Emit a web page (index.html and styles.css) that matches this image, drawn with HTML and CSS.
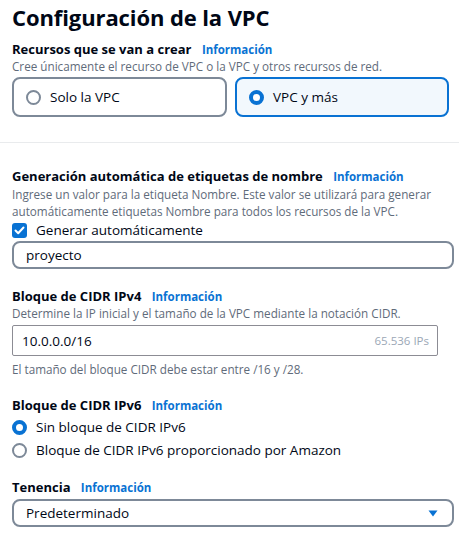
FILE: index.html
```html
<!DOCTYPE html>
<html lang="es">
<head>
<meta charset="utf-8">
<link rel="stylesheet" href="styles.css">
</head>
<body>
<div class="page">
  <h1 class="title">Configuración de la VPC</h1>

  <section class="field top">
    <div class="label">Recursos que se van a crear <a class="info">Información</a></div>
    <div class="desc">Cree únicamente el recurso de VPC o la VPC y otros recursos de red.</div>
    <div class="tiles">
      <div class="tile">
        <span class="radio"></span><span>Solo la VPC</span>
      </div>
      <div class="tile selected">
        <span class="radio on"></span><span>VPC y más</span>
      </div>
    </div>
  </section>
</div>

<hr class="sep">

<div class="page">
  <section class="field gen">
    <div class="label">Generación automática de etiquetas de nombre <a class="info">Información</a></div>
    <div class="desc">Ingrese un valor para la etiqueta Nombre. Este valor se utilizará para generar automáticamente etiquetas Nombre para todos los recursos de la VPC.</div>
    <label class="check-row">
      <span class="checkbox"><svg width="11" height="9" viewBox="0 0 11 9"><path d="M1.5 4.5 L4.2 7.2 L9.5 1.5" fill="none" stroke="#fff" stroke-width="2" stroke-linecap="round" stroke-linejoin="round"/></svg></span>
      <span>Generar automáticamente</span>
    </label>
    <div class="input round name">proyecto</div>
  </section>

  <section class="field ipv4">
    <div class="label">Bloque de CIDR IPv4 <a class="info">Información</a></div>
    <div class="desc">Determine la IP inicial y el tamaño de la VPC mediante la notación CIDR.</div>
    <div class="input square"><span>10.0.0.0/16</span><span class="count">65.536 IPs</span></div>
    <div class="desc help">El tamaño del bloque CIDR debe estar entre /16 y /28.</div>
  </section>

  <section class="field ipv6">
    <div class="label">Bloque de CIDR IPv6 <a class="info">Información</a></div>
    <div class="radio-list">
      <div class="radio-row"><span class="radio on"></span><span>Sin bloque de CIDR IPv6</span></div>
      <div class="radio-row"><span class="radio"></span><span>Bloque de CIDR IPv6 proporcionado por Amazon</span></div>
    </div>
  </section>

  <section class="field tenancy">
    <div class="label">Tenencia <a class="info">Información</a></div>
    <div class="input round select"><span>Predeterminado</span><svg class="caret" width="10" height="7" viewBox="0 0 10 7"><path d="M0.5 0.5 H9.5 L5 6.5 Z" fill="#0972d3"/></svg></div>
  </section>
</div>
</body>
</html>
```

FILE: styles.css
```css
* { box-sizing: border-box; }
html, body { margin: 0; padding: 0; background: #fff; }
body {
  font-family: "Open Sans", "Noto Sans", sans-serif;
  color: #000716;
  font-size: 14px;
  width: 459px;
  overflow: hidden;
}
.page { padding: 0 5px 0 12px; }
.title {
  margin: 0;
  padding-top: 3px;
  font-size: 22px;
  font-weight: 700;
  line-height: 28px;
  letter-spacing: -0.1px;
}
.field { display: flex; flex-direction: column; }
.top { margin-top: 10px; }
.label {
  font-size: 13px;
  font-weight: 700;
  line-height: 17px;
}
.info {
  color: #0972d3;
  font-size: 11.5px;
  font-weight: 700;
  margin-left: 7px;
}
.desc {
  font-size: 11.7px;
  color: #5f6b7a;
  line-height: 17px;
}
.tiles {
  display: grid;
  grid-template-columns: 215px 214px;
  gap: 8px;
  margin-top: 2px;
}
.tile {
  height: 40px;
  border: 2px solid #7d8998;
  border-radius: 8px;
  display: flex;
  align-items: center;
  gap: 9px;
  padding-left: 12px;
  font-size: 13.5px;
}
.tile.selected {
  border-color: #0972d3;
  background: #f2f8fd;
}
.radio {
  width: 15px;
  height: 15px;
  border-radius: 50%;
  border: 2px solid #7d8998;
  flex: none;
  background: #fff;
}
.radio.on {
  border: 4.5px solid #0972d3;
}
.sep {
  border: 0;
  border-top: 1px solid #e9ebed;
  margin: 25px 0 0 0;
}
.gen { margin-top: 25px; }
.gen .desc { margin-top: 1px; }
.check-row {
  display: flex;
  align-items: center;
  gap: 9px;
  font-size: 13.5px;
  margin-top: 1px;
  line-height: 18px;
}
.checkbox {
  width: 15px;
  height: 15px;
  border-radius: 3px;
  background: #0972d3;
  display: flex;
  align-items: center;
  justify-content: center;
}
.input {
  display: flex;
  align-items: center;
  font-size: 13.5px;
  color: #000716;
}
.input.round {
  height: 28px;
  border: 2px solid #7d8998;
  border-radius: 8px;
  padding-left: 12px;
}
.input.name { margin-top: 2px; }
.input.square {
  margin-top: 3px;
  height: 31px;
  width: 426px;
  border: 1px solid #8c8c94;
  border-radius: 2px;
  padding: 0 8px 0 9px;
  justify-content: space-between;
}
.count { color: #9ba7b6; font-size: 11.5px; }
.help { margin-top: 5px; }
.ipv4 { margin-top: 19px; }
.ipv6 { margin-top: 19px; }
.radio-list { display: flex; flex-direction: column; gap: 5px; margin-top: 4px; }
.radio-row {
  display: flex;
  align-items: center;
  gap: 9px;
  font-size: 13.5px;
  line-height: 18px;
}
.tenancy { margin-top: 20px; }
.tenancy .input { margin-top: 3px; height: 28px; padding-right: 14px; justify-content: space-between; }
```
